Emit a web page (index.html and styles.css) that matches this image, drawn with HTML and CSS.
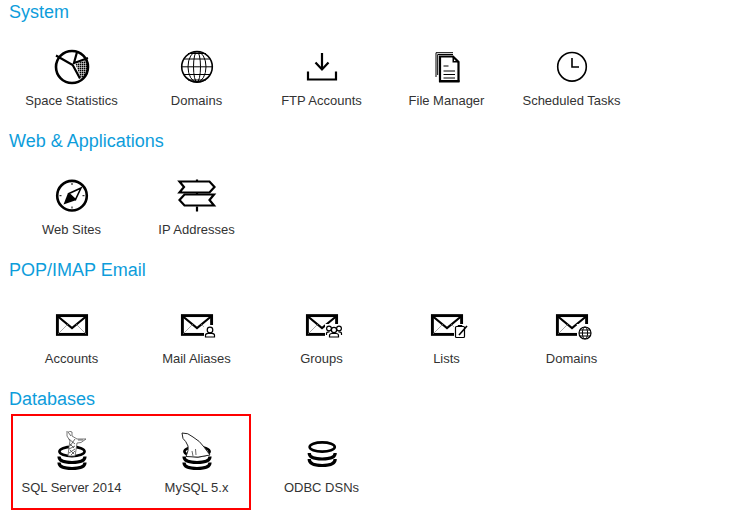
FILE: index.html
```html
<!DOCTYPE html>
<html lang="en">
<head>
<meta charset="utf-8">
<title>Hosting control panel</title>
<link rel="stylesheet" href="styles.css">
</head>
<body>
<main class="page">
  <section class="group">
    <h2 class="group-title">System</h2>
    <div class="tiles">
      <a class="tile">
        <svg class="icon" viewBox="49 44 45 45">
          <defs><pattern id="dots" width="2" height="2" patternUnits="userSpaceOnUse"><rect width="1" height="1" fill="#555"/></pattern></defs>
          <path d="M75.5 64 L87.5 59.5 A16 16 0 0 1 81 78.5 Z" fill="url(#dots)"/>
          <circle class="s25" cx="72" cy="67" r="16"/>
          <path class="s2" d="M56 55.5 L72.7 65 L80 78.5 M77.3 51 L73.7 64 M75 62.8 L88 58"/>
        </svg>
        <span class="label">Space Statistics</span>
      </a>
      <a class="tile">
        <svg class="icon" viewBox="174 44 45 45">
          <circle class="s15" cx="197" cy="66.8" r="15.3"/>
          <ellipse class="s1" cx="197" cy="66.8" rx="9" ry="15.3"/>
          <ellipse class="s1" cx="197" cy="66.8" rx="3.5" ry="15.3"/>
          <path class="s1" d="M182 66.8 H212 M184 59 H210 M184 74.5 H210 M188 53.5 H206 M188 80 H206"/>
        </svg>
        <span class="label">Domains</span>
      </a>
      <a class="tile">
        <svg class="icon" viewBox="299 44 45 45">
          <path class="s2" d="M308 71.5 V79.5 H336 V71.5 M322 53 V69 M315.5 62.5 L322 69.5 L328.5 62.5"/>
        </svg>
        <span class="label">FTP Accounts</span>
      </a>
      <a class="tile">
        <svg class="icon" viewBox="424 44 45 45">
          <path class="s1" d="M436 77 V52.7 H453 M437.7 75 V54.5 H453"/>
          <path class="s2" d="M440 81 V56.5 H453 L458.5 62 V81 Z"/>
          <path fill="#000" d="M439 78 H441 V80 H459.5 V82.5 H439 Z M452.5 56 H454 V61 H459 V62.5 H452.5 Z"/>
          <path class="s1" d="M443.5 66 H448.5 M443.5 71 H455 M443.5 74.5 H455 M443.5 78 H455"/>
        </svg>
        <span class="label">File Manager</span>
      </a>
      <a class="tile">
        <svg class="icon" viewBox="549 44 45 45">
          <circle class="s15" cx="572" cy="66.8" r="14.3"/>
          <path class="s15" d="M572 58 V67 H579"/>
        </svg>
        <span class="label">Scheduled Tasks</span>
      </a>
    </div>
  </section>

  <section class="group">
    <h2 class="group-title">Web &amp; Applications</h2>
    <div class="tiles">
      <a class="tile">
        <svg class="icon" viewBox="49 173 45 45">
          <circle class="s25" cx="72" cy="195.7" r="14.8"/>
          <path fill="#000" d="M63.5 204.5 L68 193 L76.5 200 Z"/>
          <path class="s15" d="M81 188 L69 193.5 L75.5 199.5 Z"/>
          <path class="s1" d="M72 183 V185 M72 206.5 V208.5 M59.5 195.7 H61.5 M82.5 195.7 H84.5"/>
        </svg>
        <span class="label">Web Sites</span>
      </a>
      <a class="tile">
        <svg class="icon" viewBox="174 173 45 45">
          <path class="s2" d="M197 179.5 V181 M197 193 V194.5 M197 206.5 V211.5"/>
          <path class="s2" d="M179.5 181.5 H209.5 L214.5 187 L209.5 192.5 H179.5 L184 187 Z"/>
          <path class="s2" d="M184.5 194.5 H214 L209.5 200 L214 205.5 H184.5 L179.5 200 Z"/>
        </svg>
        <span class="label">IP Addresses</span>
      </a>
    </div>
  </section>

  <section class="group">
    <h2 class="group-title">POP/IMAP Email</h2>
    <div class="tiles">
      <a class="tile">
        <svg class="icon" viewBox="49 302 45 45">
          <rect class="env" x="57.4" y="315.6" width="29.2" height="18.8"/>
          <path class="s2" d="M58 316.5 L72 328 L86 316.5"/>
          <path class="thin" d="M58.5 333.5 L67.5 324.5 M85.5 333.5 L76.5 324.5"/>
        </svg>
        <span class="label">Accounts</span>
      </a>
      <a class="tile">
        <svg class="icon" viewBox="174 302 45 45">
          <rect class="env" x="182.4" y="315.6" width="29.2" height="18.8"/>
          <path class="s2" d="M183 316.5 L197 328 L211 316.5"/>
          <path class="thin" d="M183.5 333.5 L192.5 324.5 M210.5 333.5 L201.5 324.5"/>
          <rect class="knock" x="204" y="325" width="12" height="13"/>
          <circle class="s12" cx="210" cy="330" r="2.8"/>
          <path class="s12" d="M205.5 337 V335.3 Q205.5 333.6 208 333.4 H212 Q214.5 333.6 214.5 335.3 V337 Z"/>
        </svg>
        <span class="label">Mail Aliases</span>
      </a>
      <a class="tile">
        <svg class="icon" viewBox="299 302 45 45">
          <rect class="env" x="307.4" y="315.6" width="29.2" height="18.8"/>
          <path class="s2" d="M308 316.5 L322 328 L336 316.5"/>
          <path class="thin" d="M308.5 333.5 L317.5 324.5 M335.5 333.5 L326.5 324.5"/>
          <rect class="knock" x="325" y="324" width="18" height="14"/>
          <circle class="s12" cx="334" cy="330" r="2.6"/>
          <circle class="s12" cx="329" cy="328.5" r="2.4"/>
          <circle class="s12" cx="339" cy="328.5" r="2.4"/>
          <path class="s12" d="M326.5 335 V333.5 Q326.5 331.8 329.5 331.8 M341.5 335 V333.5 Q341.5 331.8 338.5 331.8 M329.5 337 V335.5 Q329.5 333.5 332 333.5 H336 Q338.5 333.5 338.5 335.5 V337 Z"/>
        </svg>
        <span class="label">Groups</span>
      </a>
      <a class="tile">
        <svg class="icon" viewBox="424 302 45 45">
          <rect class="env" x="432.4" y="315.6" width="29.2" height="18.8"/>
          <path class="s2" d="M433 316.5 L447 328 L461 316.5"/>
          <path class="thin" d="M433.5 333.5 L442.5 324.5 M460.5 333.5 L451.5 324.5"/>
          <rect class="knock" x="454" y="324" width="15" height="15"/>
          <rect class="s12" x="455.5" y="326.5" width="9" height="11" rx="1"/>
          <path class="s1" d="M458 326.5 V325.5 H462 V326.5"/>
          <path class="s15" d="M459 335 L467 326"/>
        </svg>
        <span class="label">Lists</span>
      </a>
      <a class="tile">
        <svg class="icon" viewBox="549 302 45 45">
          <rect class="env" x="557.4" y="315.6" width="29.2" height="18.8"/>
          <path class="s2" d="M558 316.5 L572 328 L586 316.5"/>
          <path class="thin" d="M558.5 333.5 L567.5 324.5 M585.5 333.5 L576.5 324.5"/>
          <rect class="knock" x="577" y="324" width="15" height="15"/>
          <circle class="s12" cx="585" cy="333" r="6"/>
          <ellipse class="s1" cx="585" cy="333" rx="2.6" ry="6"/>
          <path class="s1" d="M579 333 H591 M580 330 H590 M580 336 H590"/>
        </svg>
        <span class="label">Domains</span>
      </a>
    </div>
  </section>

  <section class="group">
    <h2 class="group-title">Databases</h2>
    <div class="tiles">
      <a class="tile">
        <svg class="icon" viewBox="49 431 45 45">
          <ellipse class="s25" cx="72" cy="451.5" rx="12.6" ry="4.6"/>
          <path class="band" d="M59 456.5 Q59 462.5 72 462.5 Q85 462.5 85 456.5 M59 462.5 Q59 468.5 72 468.5 Q85 468.5 85 462.5"/>
          <path class="fig" d="M67 430.5 L72 432 L72 436 L77 439 L86 439 L81 442.5 L77 443 L76 450 L75 456 L68 456 L69 447 L70 441 L67 436 Z"/>
          <path class="scribble" d="M68 432 L71 436 M69 439 L75 444 M75 439 L70 446 M69 449 L75 446 M69 453 L75 449 M71 455 L75 451 M78 440 L83 440 M70 444 L74 448 M70 450 L74 454"/>
        </svg>
        <span class="label">SQL Server 2014</span>
      </a>
      <a class="tile">
        <svg class="icon" viewBox="174 431 45 45">
          <ellipse class="s25" cx="197" cy="451.5" rx="12.6" ry="4.6"/>
          <path class="band" d="M184 456.5 Q184 462.5 197 462.5 Q210 462.5 210 456.5 M184 462.5 Q184 468.5 197 468.5 Q210 468.5 210 462.5"/>
          <path class="fish" d="M182 433 Q188 432.5 193 437 Q200 441 204 447 Q207 451 210 455 Q198 458.5 186 456.5 Q189 450 188 446 Q186 441 183 438.5 Z"/>
          <path class="scribble" d="M192 451 L193 456 M196 455 L195.5 449"/>
        </svg>
        <span class="label">MySQL 5.x</span>
      </a>
      <a class="tile">
        <svg class="icon" viewBox="299 431 45 45">
          <ellipse class="s25" cx="322.2" cy="447" rx="12.6" ry="4.6"/>
          <path class="band" d="M309.2 453 Q309.2 459 322.2 459 Q335.2 459 335.2 453 M309.2 459 Q309.2 465.5 322.2 465.5 Q335.2 465.5 335.2 459"/>
        </svg>
        <span class="label">ODBC DSNs</span>
      </a>
    </div>
  </section>
  <div class="highlight"></div>
</main>
</body>
</html>
```

FILE: styles.css
```css
* {
  box-sizing: border-box;
}

html,
body {
  margin: 0;
  background: #fff;
}

body {
  font-family: "Liberation Sans", Arial, sans-serif;
}

.page {
  position: relative;
  height: 513px;
  padding-left: 9px;
  overflow: hidden;
}

.group {
  height: 129px;
}

.group-title {
  margin: 0;
  height: 24px;
  font-size: 18px;
  line-height: 24px;
  font-weight: 400;
  color: #0d9ddb;
}

.tiles {
  display: flex;
  padding-top: 20px;
}

.tile {
  display: flex;
  flex-direction: column;
  align-items: center;
  gap: 4px;
  width: 125px;
}

.icon {
  display: block;
  width: 45px;
  height: 45px;
  fill: none;
  stroke: #000;
}

.label {
  font-size: 13px;
  line-height: 16px;
  color: #333;
  white-space: nowrap;
}

.s1 { stroke-width: 1; }
.s12 { stroke-width: 1.2; }
.s15 { stroke-width: 1.6; }
.s2 { stroke-width: 2.2; }
.s25 { stroke-width: 2.6; }
.env { stroke-width: 2.9; }

.band {
  stroke-width: 3.2;
}

.icon path[fill] {
  stroke: none;
}

.thin {
  stroke: #aaa;
  stroke-width: 1;
}

.knock {
  fill: #fff;
  stroke: none;
}

.fig {
  fill: #fff;
  stroke: #555;
  stroke-width: 0.8;
}

.fish {
  fill: #fff;
  stroke: #222;
  stroke-width: 1;
}

.scribble {
  stroke: #444;
  stroke-width: 0.8;
}

.highlight {
  position: absolute;
  left: 11px;
  top: 414px;
  width: 240px;
  height: 96px;
  border: 2px solid #f00;
}
```
